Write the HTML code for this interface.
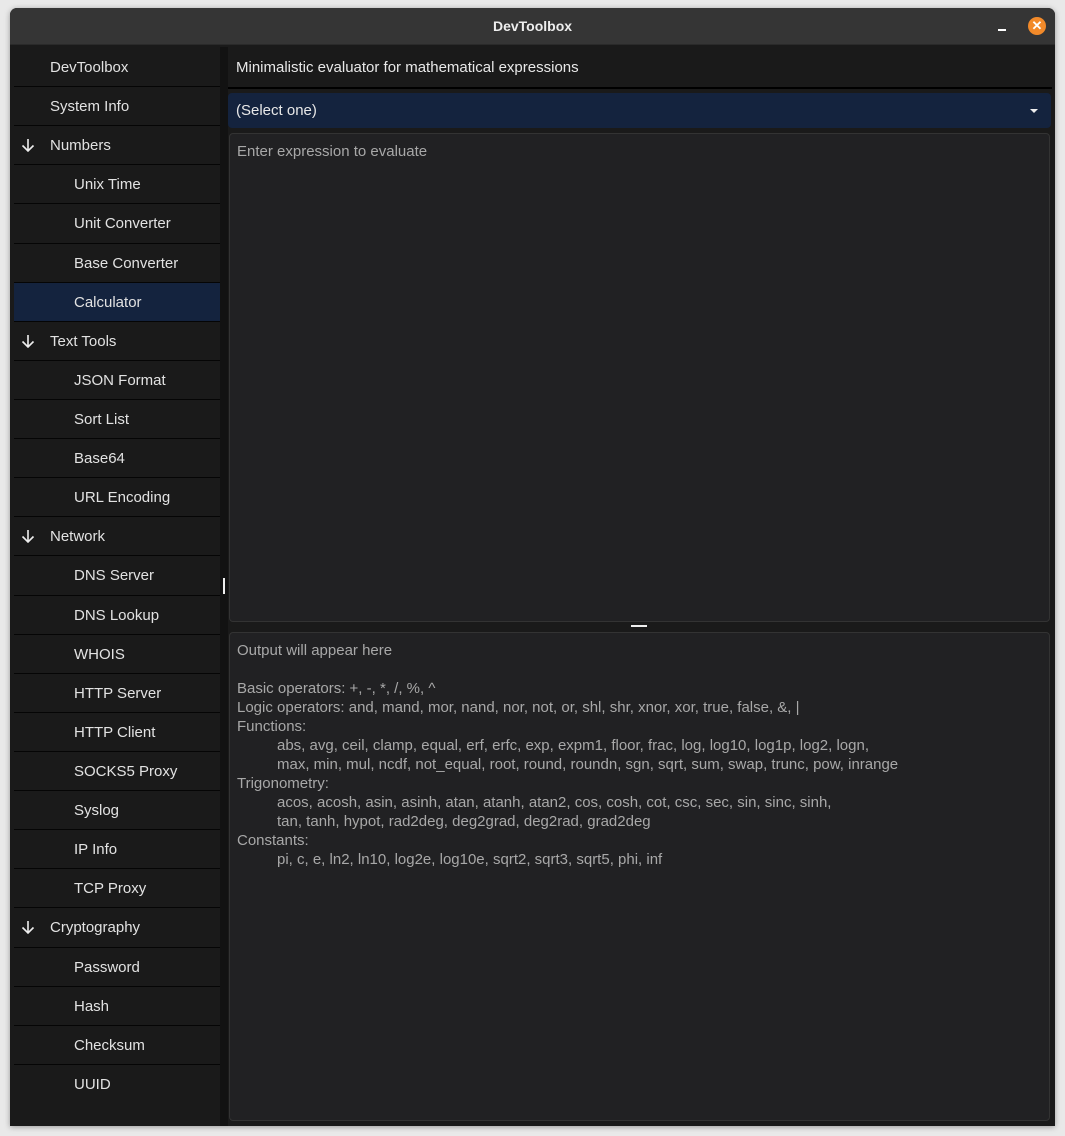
<!DOCTYPE html>
<html><head><meta charset="utf-8"><style>
*{margin:0;padding:0;box-sizing:border-box}
body{width:1065px;height:1136px;background:#e9e9e9;font-family:"Liberation Sans",sans-serif;font-size:15px;position:relative;overflow:hidden}
.win{position:absolute;left:10px;top:8px;width:1045px;height:1118px;background:#1a1a1a;border-radius:7px 7px 0 0;box-shadow:0 1px 6px rgba(0,0,0,.35);overflow:hidden}
.title{height:37px;background:#353535;color:#eee;font-weight:bold;text-align:center;line-height:36px;font-size:14px;border-bottom:1px solid #2a2a2a;position:relative}
.min{position:absolute;left:988px;top:21px;width:8px;height:2px;background:#fff}
.close{position:absolute;left:1018px;top:9px;width:18px;height:18px;border-radius:50%;background:#f28a2a;color:#fff;font-size:13px;line-height:18px;text-align:center;font-weight:bold}
.side{position:absolute;left:4px;top:40px;width:206px;bottom:0;background:#1a1a1a}
.row{height:39.12px;border-bottom:1px solid #050505;color:#e2e2e2;line-height:40px;padding-left:36px;position:relative}
.row.s{padding-left:60px}
.row.sel{background:#14233e}
.row svg{position:absolute;left:7px;top:12px}
.div{position:absolute;left:210px;top:39px;width:8px;bottom:0;background:#121212}
.grip{position:absolute;left:213px;top:570px;width:2px;height:16px;background:#eee}
.hdr{position:absolute;left:218px;top:39px;right:3px;height:42px;border-bottom:2px solid #000;color:#e8e8e8;line-height:42px;padding-left:8px}
.dd{position:absolute;left:218px;top:85px;width:823px;height:35px;background:#14233e;border-radius:4px;color:#e8e8e8;line-height:36px;padding-left:8px}
.dd .tri{position:absolute;right:13px;top:16px;border-left:4px solid transparent;border-right:4px solid transparent;border-top:4px solid #eee}
.box{position:absolute;left:219px;width:821px;background:#212123;border:1px solid #333;border-radius:4px;color:#a8a8a8;padding:8px 7px;line-height:19px}
.hs{position:absolute;left:621px;top:617px;width:16px;height:2px;background:#eee}
.ind{padding-left:40px}
</style></head><body>
<div class="win">
<div class="title">DevToolbox<div class="min"></div><div class="close">✕</div></div>
<div class="side">
<div class="row">DevToolbox</div>
<div class="row">System Info</div>
<div class="row"><svg width="14" height="14" viewBox="0 0 14 14"><path d="M7 1V13M1.5 7.5L7 13L12.5 7.5" stroke="#eee" stroke-width="1.6" fill="none"/></svg>Numbers</div>
<div class="row s">Unix Time</div>
<div class="row s">Unit Converter</div>
<div class="row s">Base Converter</div>
<div class="row s sel">Calculator</div>
<div class="row"><svg width="14" height="14" viewBox="0 0 14 14"><path d="M7 1V13M1.5 7.5L7 13L12.5 7.5" stroke="#eee" stroke-width="1.6" fill="none"/></svg>Text Tools</div>
<div class="row s">JSON Format</div>
<div class="row s">Sort List</div>
<div class="row s">Base64</div>
<div class="row s">URL Encoding</div>
<div class="row"><svg width="14" height="14" viewBox="0 0 14 14"><path d="M7 1V13M1.5 7.5L7 13L12.5 7.5" stroke="#eee" stroke-width="1.6" fill="none"/></svg>Network</div>
<div class="row s">DNS Server</div>
<div class="row s">DNS Lookup</div>
<div class="row s">WHOIS</div>
<div class="row s">HTTP Server</div>
<div class="row s">HTTP Client</div>
<div class="row s">SOCKS5 Proxy</div>
<div class="row s">Syslog</div>
<div class="row s">IP Info</div>
<div class="row s">TCP Proxy</div>
<div class="row"><svg width="14" height="14" viewBox="0 0 14 14"><path d="M7 1V13M1.5 7.5L7 13L12.5 7.5" stroke="#eee" stroke-width="1.6" fill="none"/></svg>Cryptography</div>
<div class="row s">Password</div>
<div class="row s">Hash</div>
<div class="row s">Checksum</div>
<div class="row s" style="border:none">UUID</div>
</div>
<div class="div"></div><div class="grip"></div>
<div class="hdr">Minimalistic evaluator for mathematical expressions</div>
<div class="dd">(Select one)<div class="tri"></div></div>
<div class="box" style="top:125px;height:489px">Enter expression to evaluate</div>
<div class="hs"></div>
<div class="box" style="top:624px;height:489px">
<div>Output will appear here</div><div>&nbsp;</div>
<div>Basic operators: +, -, *, /, %, ^</div>
<div>Logic operators: and, mand, mor, nand, nor, not, or, shl, shr, xnor, xor, true, false, &amp;, |</div>
<div>Functions:</div>
<div class="ind">abs, avg, ceil, clamp, equal, erf, erfc, exp, expm1, floor, frac, log, log10, log1p, log2, logn,</div>
<div class="ind">max, min, mul, ncdf, not_equal, root, round, roundn, sgn, sqrt, sum, swap, trunc, pow, inrange</div>
<div>Trigonometry:</div>
<div class="ind">acos, acosh, asin, asinh, atan, atanh, atan2, cos, cosh, cot, csc, sec, sin, sinc, sinh,</div>
<div class="ind">tan, tanh, hypot, rad2deg, deg2grad, deg2rad, grad2deg</div>
<div>Constants:</div>
<div class="ind">pi, c, e, ln2, ln10, log2e, log10e, sqrt2, sqrt3, sqrt5, phi, inf</div>
</div>
</div>
</body></html>
